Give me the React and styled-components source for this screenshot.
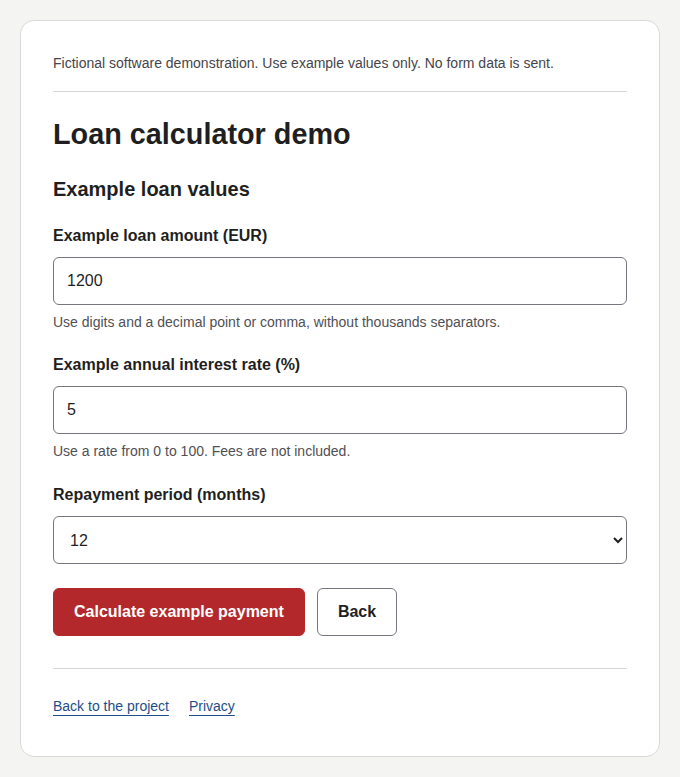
import React from 'react';
import styled, { createGlobalStyle } from 'styled-components';

const GlobalStyle = createGlobalStyle`
  * { box-sizing: border-box; }
  body {
    margin: 0;
    background: #f4f4f2;
    font-family: "Liberation Sans", Arial, sans-serif;
    color: #1f1f22;
  }
`;

const Page = styled.main`
  padding: 20px;
`;

const Card = styled.section`
  background: #fff;
  border: 1px solid #d9d9d9;
  border-radius: 14px;
  padding: 32px 32px 40px;
`;

const Notice = styled.p`
  margin: 0;
  padding-bottom: 18px;
  border-bottom: 1px solid #d6d6d6;
  font-size: 14px;
  line-height: 20px;
  color: #45454a;
`;

const Title = styled.h1`
  margin: 25px 0 0;
  font-size: 28.8px;
  line-height: 34px;
  font-weight: 700;
`;

const SubTitle = styled.h2`
  margin: 26px 0 0;
  font-size: 20px;
  line-height: 24px;
  font-weight: 700;
`;

const Field = styled.div`
  margin-top: ${(p) => p.$top}px;
  display: flex;
  flex-direction: column;
`;

const Label = styled.label`
  font-size: 16px;
  line-height: 20px;
  font-weight: 700;
  margin-bottom: 11px;
`;

const TextInput = styled.input`
  height: 48px;
  width: 100%;
  border: 1px solid #76767e;
  border-radius: 6px;
  padding: 0 13px;
  font: inherit;
  font-size: 16px;
  color: #1f1f22;
  background: #fff;
`;

const Select = styled.select`
  height: 48px;
  width: 100%;
  border: 1px solid #76767e;
  border-radius: 6px;
  padding: 0 12px;
  font: inherit;
  font-size: 16px;
  color: #1f1f22;
  background: #fff;
`;

const Hint = styled.p`
  margin: 7px 0 0;
  font-size: 14px;
  line-height: 20px;
  color: #505055;
`;

const Actions = styled.div`
  display: flex;
  gap: 12px;
  margin-top: 24px;
  padding-bottom: 32px;
  border-bottom: 1px solid #d6d6d6;
`;

const Button = styled.button`
  height: 48px;
  padding: 0 20px;
  border-radius: 6px;
  font: inherit;
  font-size: 16px;
  font-weight: 700;
  cursor: pointer;
  border: 1px solid ${(p) => (p.$primary ? '#b3292b' : '#76767e')};
  background: ${(p) => (p.$primary ? '#b3292b' : '#fff')};
  color: ${(p) => (p.$primary ? '#fff' : '#1f1f22')};
`;

const Footer = styled.nav`
  display: flex;
  gap: 20px;
  padding-top: 27px;
`;

const FooterLink = styled.a`
  font-size: 14px;
  line-height: 20px;
  color: #1d4e89;
  text-decoration: underline;
  text-underline-offset: 4px;
`;

export default function App() {
  return (
    <>
      <GlobalStyle />
      <Page>
        <Card>
          <Notice>
            Fictional software demonstration. Use example values only. No form data is sent.
          </Notice>
          <Title>Loan calculator demo</Title>
          <form onSubmit={(e) => e.preventDefault()}>
            <SubTitle>Example loan values</SubTitle>
            <Field $top={25}>
              <Label htmlFor="amount">Example loan amount (EUR)</Label>
              <TextInput id="amount" defaultValue="1200" inputMode="decimal" />
              <Hint>Use digits and a decimal point or comma, without thousands separators.</Hint>
            </Field>
            <Field $top={23}>
              <Label htmlFor="rate">Example annual interest rate (%)</Label>
              <TextInput id="rate" defaultValue="5" inputMode="decimal" />
              <Hint>Use a rate from 0 to 100. Fees are not included.</Hint>
            </Field>
            <Field $top={24}>
              <Label htmlFor="months">Repayment period (months)</Label>
              <Select id="months" defaultValue="12">
                <option value="6">6</option>
                <option value="12">12</option>
                <option value="24">24</option>
                <option value="36">36</option>
              </Select>
            </Field>
            <Actions>
              <Button type="submit" $primary>Calculate example payment</Button>
              <Button type="button">Back</Button>
            </Actions>
          </form>
          <Footer>
            <FooterLink href="#">Back to the project</FooterLink>
            <FooterLink href="#">Privacy</FooterLink>
          </Footer>
        </Card>
      </Page>
    </>
  );
}
